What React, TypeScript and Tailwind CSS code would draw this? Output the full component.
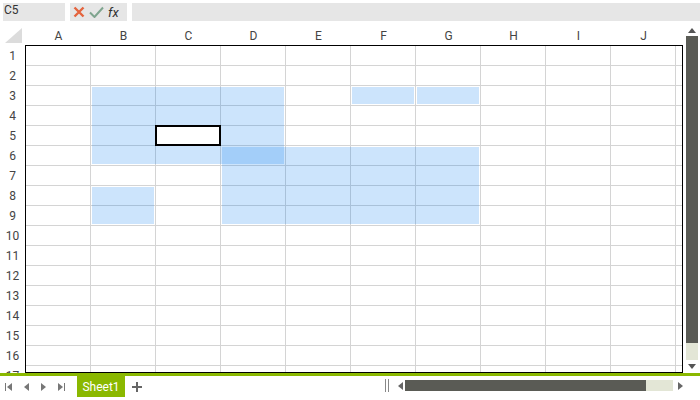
import React from 'react';

const COLS = ['A', 'B', 'C', 'D', 'E', 'F', 'G', 'H', 'I', 'J'];
const ROWS = Array.from({ length: 17 }, (_, i) => i + 1);

// cell ranges that are highlighted: [col, row, colSpan, rowSpan], zero-based
const RANGES: [number, number, number, number][] = [
  [1, 2, 3, 4],
  [5, 2, 1, 1],
  [6, 2, 1, 1],
  [3, 5, 4, 4],
  [1, 7, 1, 2],
];

const Tri: React.FC<{ dir: 'up' | 'down' | 'left' | 'right'; className?: string }> = ({ dir, className }) => {
  const pts = {
    up: '0,5 4,0 8,5',
    down: '0,0 8,0 4,5',
    left: '5,0 5,8 0,4',
    right: '0,0 0,8 5,4',
  }[dir];
  const vb = dir === 'up' || dir === 'down' ? '0 0 8 5' : '0 0 5 8';
  const size = dir === 'up' || dir === 'down' ? 'w-[8px] h-[5px]' : 'w-[5px] h-[8px]';
  return (
    <svg viewBox={vb} className={`${size} ${className ?? ''}`}>
      <polygon points={pts} fill="currentColor" />
    </svg>
  );
};

export default function App() {
  return (
    <div
      className="w-[700px] h-[400px] bg-white overflow-hidden flex flex-col text-[12px] text-[#444]"
      style={{ fontFamily: 'Roboto, "Liberation Sans", sans-serif' }}
    >
      {/* formula bar */}
      <div className="h-[25px] flex pt-[3px] pb-[4px] gap-[5px] pl-[3px]">
        <div className="w-[62px] bg-[#e6e6e6] text-[#333] leading-[14px] pl-[1px]">C5</div>
        <div className="w-[57px] bg-[#e6e6e6] flex items-center pl-[3px] gap-[4px]">
          <svg viewBox="0 0 12 12" className="w-[12px] h-[12px]">
            <path d="M1.5 1.5 L10.5 10.5 M10.5 1.5 L1.5 10.5" stroke="#e4643e" strokeWidth="2.4" />
          </svg>
          <svg viewBox="0 0 15 12" className="w-[15px] h-[12px]">
            <path d="M1 6.5 L5.5 11 L14 1.5" stroke="#7fa58f" strokeWidth="2" fill="none" />
          </svg>
          <span className="italic text-[#333] text-[13px] leading-none">fx</span>
        </div>
        <div className="flex-1 bg-[#e6e6e6]" />
      </div>

      {/* sheet area */}
      <div className="h-[348px] flex">
        <div className="w-[683px] flex flex-col">
          {/* column header */}
          <div className="h-[20px] flex">
            <div className="w-[26px] flex items-end pl-[5px] pb-[2px]">
              <svg viewBox="0 0 17 15" className="w-[17px] h-[15px]">
                <polygon points="17,0 17,15 0,15" fill="#dcdcdc" />
              </svg>
            </div>
            {COLS.map((c) => (
              <div key={c} className="w-[65px] flex items-center justify-center pt-[1px]">
                {c}
              </div>
            ))}
          </div>
          <div className="flex-1 flex">
            {/* row header */}
            <div className="w-[25px] flex flex-col pt-[1px] overflow-hidden h-[328px]">
              {ROWS.map((r) => (
                <div key={r} className="h-[20px] shrink-0 flex items-center justify-center">
                  {r}
                </div>
              ))}
            </div>
            {/* grid */}
            <div className="w-[658px] h-[328px] border border-black overflow-hidden">
              <div className="relative w-full h-full">
                {ROWS.map((r) => (
                  <div key={r} className="h-[20px] flex">
                    {COLS.map((c) => (
                      <div key={c} className="w-[65px] shrink-0 border-r border-b border-[#d4d4d4]" />
                    ))}
                    <div className="flex-1 border-b border-[#d4d4d4]" />
                  </div>
                ))}
                {RANGES.map(([c, r, cs, rs], i) => (
                  <div
                    key={i}
                    className="absolute bg-[rgba(0,120,240,0.2)]"
                    style={{ left: c * 65 + 1, top: r * 20 + 1, width: cs * 65 - 3, height: rs * 20 - 3 }}
                  />
                ))}
                <div className="absolute left-[129px] top-[79px] w-[66px] h-[21px] border-2 border-black bg-white" />
              </div>
            </div>
          </div>
        </div>
        {/* vertical scrollbar */}
        <div className="w-[12px] ml-[3px] flex flex-col">
          <div className="h-[11px] flex items-center justify-center text-[#555]">
            <Tri dir="up" />
          </div>
          <div className="h-[307px] bg-[#5a5b55]" />
          <div className="h-[17px] bg-[#e3e6d6]" />
          <div className="flex-1 flex items-center justify-center text-[#555]">
            <Tri dir="down" />
          </div>
        </div>
      </div>

      <div className="h-[3px] bg-[#8ab800]" />

      {/* tab bar */}
      <div className="flex-1 flex items-start">
        <div className="flex items-center h-[21px] text-[#777] pl-[5px] gap-[12px] w-[77px]">
          <div className="flex items-center gap-[1px]">
            <div className="w-[1px] h-[8px] bg-current" />
            <Tri dir="left" />
          </div>
          <Tri dir="left" />
          <Tri dir="right" />
          <div className="flex items-center gap-[1px]">
            <Tri dir="right" />
            <div className="w-[1px] h-[8px] bg-current" />
          </div>
        </div>
        <div className="w-[48px] h-[21px] bg-[#8ab800] text-white flex items-center justify-center">Sheet1</div>
        <div className="w-[24px] h-[21px] flex items-center justify-center text-[#666]">
          <svg viewBox="0 0 12 12" className="w-[12px] h-[12px]">
            <path d="M6 1 V11 M1 6 H11" stroke="currentColor" strokeWidth="2" />
          </svg>
        </div>
        <div className="flex-1" />
        <div className="flex items-center h-[17px] mt-[1px] pr-[17px]">
          <div className="flex gap-[2px] h-[13px] mr-[9px]">
            <div className="w-[1px] bg-[#888]" />
            <div className="w-[1px] bg-[#888]" />
          </div>
          <Tri dir="left" className="text-[#666] w-[4px] mr-[2px]" />
          <div className="w-[241px] h-[11px] bg-[#5a5b55]" />
          <div className="w-[27px] h-[11px] bg-[#e3e6d6]" />
          <Tri dir="right" className="text-[#666] w-[4px] ml-[5px]" />
        </div>
      </div>
    </div>
  );
}
